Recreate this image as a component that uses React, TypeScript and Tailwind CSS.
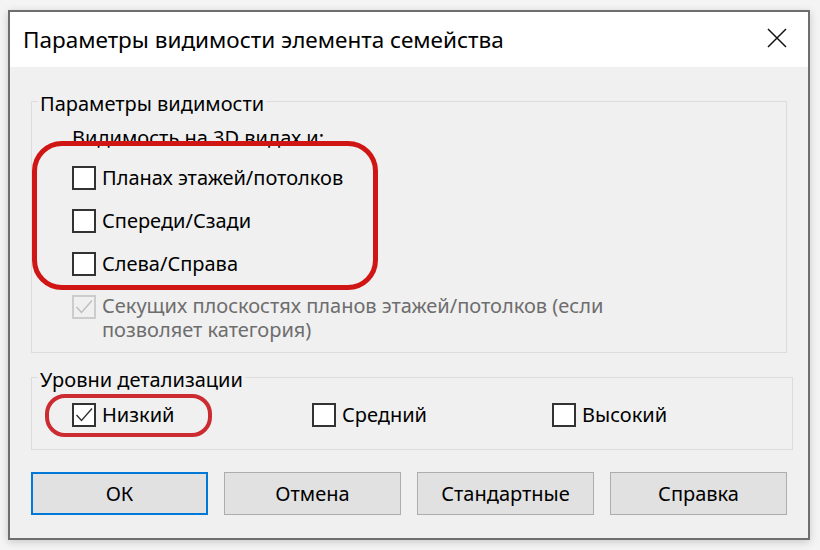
import React from 'react';

const font = { fontFamily: '"Noto Sans", "Open Sans", sans-serif' };

function Box({ checked = false, disabled = false }: { checked?: boolean; disabled?: boolean }) {
  return (
    <span
      className={
        'w-[24px] h-[24px] shrink-0 border-2 flex items-center justify-center ' +
        (disabled ? 'border-[#cccccc] bg-[#f0f0f0]' : 'border-[#333333] bg-white')
      }
    >
      {checked && (
        <svg width="20" height="20" viewBox="0 0 20 20" fill="none">
          <path
            d="M2.5 10 L7.5 15.5 L18 3.5"
            stroke={disabled ? '#bdbdbd' : '#333333'}
            strokeWidth="1.4"
          />
        </svg>
      )}
    </span>
  );
}

function Check({ label, checked }: { label: string; checked?: boolean }) {
  return (
    <div className="flex items-center gap-[6px]">
      <Box checked={checked} />
      <span>{label}</span>
    </div>
  );
}

function Button({ label, primary }: { label: string; primary?: boolean }) {
  return (
    <button
      className={
        'w-[177px] h-[43px] bg-[#e1e1e1] text-[20px] text-black ' +
        (primary ? 'border-2 border-[#0078d7]' : 'border border-[#adadad]')
      }
    >
      {label}
    </button>
  );
}

export default function App() {
  return (
    <div className="relative w-[820px] h-[550px] bg-[#f4f4f4] pt-[10px] pl-[8px] overflow-hidden" style={font}>
      <div className="w-[802px] h-[530px] border-2 border-[#6e6e6e] bg-[#f0f0f0] flex flex-col shadow-[0_2px_8px_rgba(0,0,0,0.18)] text-black">
        {/* title bar */}
        <div className="h-[55px] bg-white flex items-center justify-between pl-[13px] pr-[21px]">
          <span className="text-[22.5px] leading-[30px]">Параметры видимости элемента семейства</span>
          <svg width="20" height="20" viewBox="0 0 20 20" className="mt-[-4px]">
            <path d="M1 1 L19 19 M19 1 L1 19" stroke="#111" strokeWidth="1.5" />
          </svg>
        </div>

        <div className="px-[21px] text-[20px] leading-[24px]">
          <fieldset className="mt-[19px] border border-[#dcdcdc] p-0 pb-[10px]">
            <legend className="ml-[6px] px-[2px] pt-[6px]">Параметры видимости</legend>
            <div className="pl-[40px]">
              <div className="mt-[10px]">Видимость на 3D видах и:</div>
              <div className="mt-[6px] flex flex-col">
                <div className="h-[43px] flex items-center"><Check label="Планах этажей/потолков" /></div>
                <div className="h-[43px] flex items-center"><Check label="Спереди/Сзади" /></div>
                <div className="h-[43px] flex items-center"><Check label="Слева/Справа" /></div>
              </div>
              <div className="mt-[9px] flex items-start gap-[6px] text-[#6d6d6d]">
                <span className="mt-[1px]"><Box checked disabled /></span>
                <span className="w-[520px]">Секущих плоскостях планов этажей/потолков (если позволяет категория)</span>
              </div>
            </div>
          </fieldset>

          <fieldset className="mt-[9px] border border-[#dcdcdc] p-0 pb-[11px]">
            <legend className="ml-[6px] px-[2px] pt-[6px]">Уровни детализации</legend>
            <div className="pl-[40px] h-[46px] grid grid-cols-[240px_240px_240px] items-center">
              <Check label="Низкий" checked />
              <Check label="Средний" />
              <Check label="Высокий" />
            </div>
          </fieldset>

          <div className="mt-[22px] flex justify-between">
            <Button label="ОК" primary />
            <Button label="Отмена" />
            <Button label="Стандартные" />
            <Button label="Справка" />
          </div>
        </div>
      </div>

      {/* red annotation marks */}
      <div className="absolute left-[32px] top-[141px] w-[346px] h-[149px] border-[5px] border-[#d01515] rounded-[30px]" />
      <div className="absolute left-[45px] top-[394px] w-[167px] h-[43px] border-4 border-[#cc2b31] rounded-[20px]" />
    </div>
  );
}
